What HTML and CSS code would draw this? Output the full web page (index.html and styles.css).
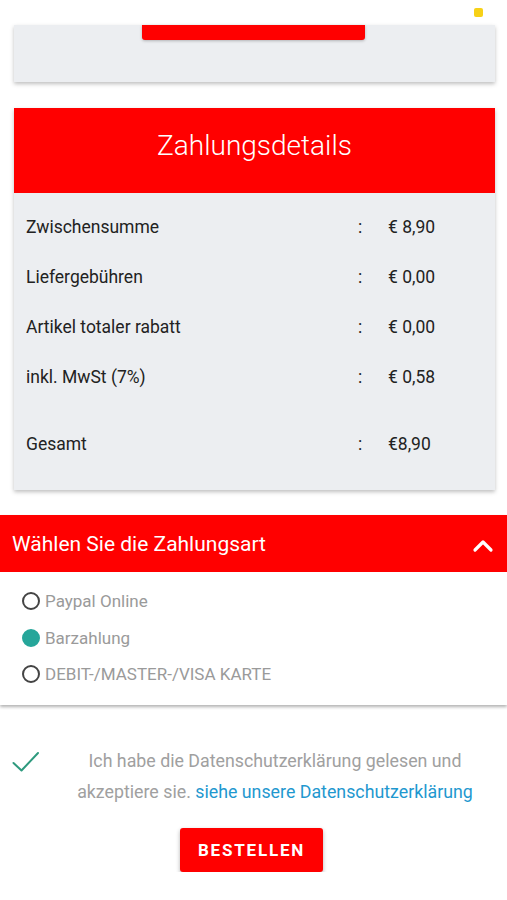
FILE: index.html
```html
<!DOCTYPE html>
<html lang="de">

<head>
    <meta charset="UTF-8">
    <meta name="viewport" content="width=device-width, initial-scale=1.0">
    <title>Checkout</title>
    <link rel="stylesheet" href="styles.css">
</head>

<body>
<span class="status-dot"></span>

<!-- Previous card (scrolled) -->
<div class="card card-top">
    <div class="top-bar"></div>
</div>

<!-- Payment details -->
<div class="card details">
    <div class="details-header">Zahlungsdetails</div>
    <div class="details-body">
        <div class="row">
            <span class="row-label">Zwischensumme</span>
            <span class="row-colon">:</span>
            <span class="row-value">€ 8,90</span>
        </div>
        <div class="row">
            <span class="row-label">Liefergebühren</span>
            <span class="row-colon">:</span>
            <span class="row-value">€ 0,00</span>
        </div>
        <div class="row">
            <span class="row-label">Artikel totaler rabatt</span>
            <span class="row-colon">:</span>
            <span class="row-value">€ 0,00</span>
        </div>
        <div class="row">
            <span class="row-label">inkl. MwSt (7%)</span>
            <span class="row-colon">:</span>
            <span class="row-value">€ 0,58</span>
        </div>
        <div class="row row-total">
            <span class="row-label">Gesamt</span>
            <span class="row-colon">:</span>
            <span class="row-value">€8,90</span>
        </div>
    </div>
</div>

<!-- Payment method -->
<div class="method">
    <div class="method-header">
        <span>Wählen Sie die Zahlungsart</span>
        <svg class="chevron" width="22" height="14" viewBox="0 0 22 14">
            <path d="M3 11 L11 3 L19 11" fill="none" stroke="#fff" stroke-width="3.2" stroke-linecap="round" stroke-linejoin="round"/>
        </svg>
    </div>
    <div class="method-list">
        <label class="option"><span class="radio"></span>Paypal Online</label>
        <label class="option"><span class="radio checked"></span>Barzahlung</label>
        <label class="option"><span class="radio"></span>DEBIT-/MASTER-/VISA KARTE</label>
    </div>
</div>

<!-- Privacy -->
<div class="privacy">
    <svg class="check" width="28" height="22" viewBox="0 0 28 22">
        <path d="M1.5 12 L9.5 19.5 L26 2" fill="none" stroke="#2e9a7e" stroke-width="2" stroke-linecap="round" stroke-linejoin="round"/>
    </svg>
    <p class="privacy-text">Ich habe die Datenschutzerklärung gelesen und<br>akzeptiere sie. <a href="#">siehe unsere Datenschutzerklärung</a></p>
</div>

<div class="order">
    <button class="order-button">BESTELLEN</button>
</div>
</body>

</html>
```

FILE: styles.css
```css
* {
    box-sizing: border-box;
}

body {
    margin: 0;
    padding: 0;
    background: #ffffff;
    font-family: Roboto, 'Liberation Sans', sans-serif;
    color: #222;
}

.status-dot {
    position: absolute;
    top: 8px;
    left: 474px;
    width: 9px;
    height: 9px;
    border-radius: 2px;
    background-color: #f7d117;
}

.card {
    margin: 0 12px 0 14px;
    background-color: #eceef1;
    box-shadow: 0 2px 4px rgba(0, 0, 0, 0.25);
}

.card-top {
    margin-top: 25px;
    height: 57px;
}

.top-bar {
    width: 223px;
    height: 15px;
    margin-left: 128px;
    background-color: #ff0000;
    border-radius: 0 0 3px 3px;
    box-shadow: 0 1px 3px rgba(0, 0, 0, 0.25);
}

.details {
    margin-top: 26px;
}

.details-header {
    height: 85px;
    display: flex;
    align-items: center;
    justify-content: center;
    background-color: #ff0000;
    color: #fff;
    font-size: 28px;
    font-weight: 300;
    padding-bottom: 10px;
}

.details-body {
    padding: 9px 0 21px 12px;
}

.row {
    display: grid;
    grid-template-columns: 332px 30px 1fr;
    align-items: center;
    height: 50px;
    font-size: 17.5px;
    color: #222;
}

.row-total {
    margin-top: 17px;
}

.method {
    margin-top: 25px;
    box-shadow: 0 2px 3px rgba(0, 0, 0, 0.3);
}

.method-header {
    height: 57px;
    display: flex;
    align-items: center;
    justify-content: space-between;
    padding: 0 13px 0 12px;
    background-color: #ff0000;
    color: #fff;
    font-size: 21px;
}

.chevron {
    margin-top: 4px;
}

.method-list {
    padding: 11px 0 12px 22px;
}

.option {
    display: flex;
    align-items: center;
    gap: 5px;
    height: 36.5px;
    font-size: 17px;
    color: #9a9a9a;
}

.radio {
    width: 18px;
    height: 18px;
    border: 2px solid #444;
    border-radius: 50%;
}

.radio.checked {
    border-color: #26a69a;
    background-color: #26a69a;
}

.privacy {
    display: flex;
    align-items: flex-start;
    margin-top: 40px;
    padding: 0 17px 0 12px;
}

.check {
    margin-top: 6px;
    flex-shrink: 0;
}

.privacy-text {
    flex: 1;
    margin: 0 0 0 20px;
    text-align: center;
    font-size: 17.8px;
    line-height: 31px;
    color: #a0a0a0;
}

.privacy-text a {
    color: #1f98cf;
    text-decoration: none;
}

.order {
    display: flex;
    justify-content: center;
    margin-top: 21px;
    padding-right: 4px;
}

.order-button {
    width: 143px;
    height: 44px;
    border: none;
    border-radius: 3px;
    background-color: #ff0000;
    color: #fff;
    font-family: Roboto, 'Liberation Sans', sans-serif;
    font-size: 17px;
    font-weight: bold;
    letter-spacing: 1.8px;
    box-shadow: 0 2px 4px rgba(0, 0, 0, 0.3);
    cursor: pointer;
}
```
